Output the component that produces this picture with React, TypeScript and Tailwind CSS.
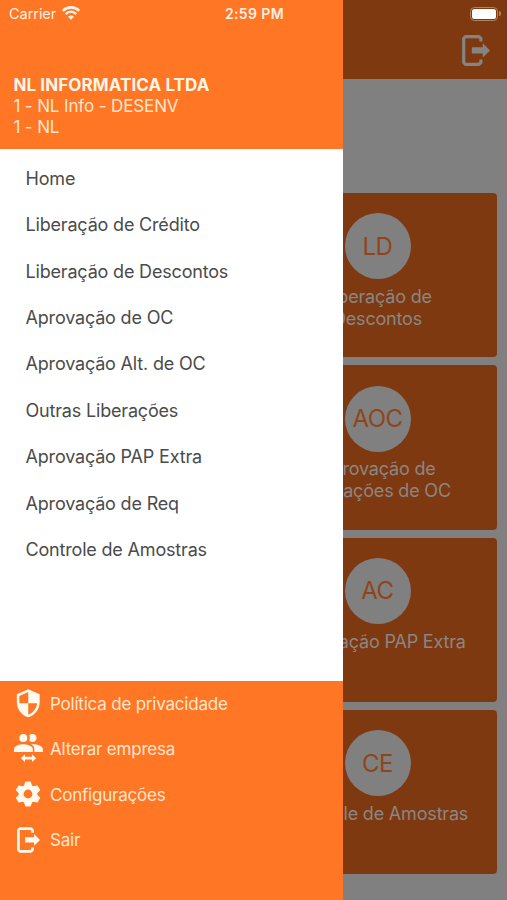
import { MdSecurity } from "react-icons/md";

const menuItems = [
  "Home",
  "Liberação de Crédito",
  "Liberação de Descontos",
  "Aprovação de OC",
  "Aprovação Alt. de OC",
  "Outras Liberações",
  "Aprovação PAP Extra",
  "Aprovação de Req",
  "Controle de Amostras",
];

const cards = [
  { initials: "LD", lines: ["Liberação de", "Descontos"] },
  { initials: "AOC", lines: ["Aprovação de", "Alterações de OC"] },
  { initials: "AC", lines: ["Aprovação PAP Extra"] },
  { initials: "CE", lines: ["Controle de Amostras"] },
];

const gearAngles = [0, 60, 120, 180, 240, 300];

function ExitIcon({ className }: { className?: string }) {
  return (
    <svg viewBox="0 0 28 31" className={className} fill="none" aria-hidden="true">
      <path
        d="M18.9 6.6V3.4L17 1.7H3.4L1.7 3.4V27.6L3.4 29.3H17L18.9 27.6V24.6"
        stroke="currentColor"
        strokeWidth="3.2"
        strokeLinejoin="round"
      />
      <path d="M9.8 12.3H20.8V8.2L28 15.4L20.8 22.6V18.5H9.8Z" fill="currentColor" />
    </svg>
  );
}

function SwitchPeopleIcon({ className }: { className?: string }) {
  return (
    <svg viewBox="0 0 29 28" className={className} fill="currentColor" aria-hidden="true">
      <circle cx="9.3" cy="4" r="4" />
      <path d="M15.2 1.5A4.1 4.1 0 1 1 15.2 6.5A5.2 5.2 0 0 0 15.2 1.5Z" />
      <path d="M0 18V15.2C0 11.7 5.4 10.2 9.3 10.2S18.8 11.7 18.8 15.2V18Z" />
      <path d="M17.2 10.3C22 9.8 28.8 11.4 28.8 15.2V18H20.4V15.2C20.4 13 19.1 11.4 17.2 10.3Z" />
      <path d="M6.8 24.2L11 20.2V22.8H18V20.2L22.2 24.2L18 28V25.6H11V28Z" />
    </svg>
  );
}

function GearIcon({ className }: { className?: string }) {
  return (
    <svg viewBox="0 0 26 26" className={className} fill="none" aria-hidden="true">
      <circle cx="13" cy="13" r="6.9" stroke="currentColor" strokeWidth="5" />
      <g fill="currentColor" stroke="currentColor" strokeLinejoin="round">
        {gearAngles.map((angle) => (
          <path key={angle} d="M10.6 1L9.3 5.6H16.7L15.4 1Z" transform={`rotate(${angle} 13 13)`} />
        ))}
      </g>
    </svg>
  );
}

function WifiIcon() {
  return (
    <svg viewBox="0 0 18 14" className="-mt-0.5 h-3.5 w-[18px]" fill="none" aria-hidden="true">
      <path d="M.8 4.8C5.4 .2 12.6 .2 17.2 4.8" stroke="currentColor" strokeWidth="2.6" />
      <path d="M3.7 8.1C6.8 5.1 11.2 5.1 14.3 8.1" stroke="currentColor" strokeWidth="2.5" />
      <path d="M6 10.7C7.7 9.2 10.3 9.2 12 10.7L9 13.7Z" fill="currentColor" />
    </svg>
  );
}

function StatusBar() {
  return (
    <div className="absolute inset-x-0 top-0 grid h-7 grid-cols-3 items-center pl-[8px] pr-[6px] text-[#fff1e4]">
      <div className="flex items-center gap-[6px] pl-px text-[14.5px] tracking-[-0.05px]">
        Carrier
        <WifiIcon />
      </div>
      <div className="-mt-px text-center text-[14px] font-semibold tracking-[0.4px]">2:59 PM</div>
      <div className="-mt-px flex items-center justify-end gap-px">
        <div className="h-[14px] w-[28px] rounded-[4.5px] border border-[#b5815f] p-px">
          <div className="h-full rounded-[2.5px] bg-white" />
        </div>
        <div className="h-[5px] w-[2px] rounded-r-full bg-[#b5815f]" />
      </div>
    </div>
  );
}

function HomeScreen() {
  return (
    <div className="flex h-full flex-col bg-[#808080]">
      <header className="flex h-[79px] justify-end bg-[#7e3911] pr-[17px] pt-[35px]">
        <ExitIcon className="h-[31px] w-7 text-[#868482]" />
      </header>
      <main className="mt-[114px] flex flex-col items-end gap-2 pr-[10px]">
        {cards.map((card) => (
          <section
            key={card.initials}
            className="flex h-[164.3px] w-[239px] flex-col items-center rounded-[4px] bg-[#7e3911] pt-[20.4px]"
          >
            <div className="flex size-[66px] items-center justify-center rounded-full bg-[#808080] pt-px text-[24px] tracking-[-0.5px] text-[#8f4519]">
              {card.initials}
            </div>
            <div className="mt-[6.6px] text-center text-[18px] leading-[22px] tracking-[-0.18px] text-[#8b8683]">
              {card.lines.map((line) => (
                <p key={line} className="whitespace-nowrap">{line}</p>
              ))}
            </div>
          </section>
        ))}
      </main>
    </div>
  );
}

function Drawer() {
  return (
    <aside className="absolute inset-y-0 left-0 flex w-[343px] flex-col bg-white">
      <header className="h-[149px] bg-[#ff7624] pl-[13.4px] pt-[75px] text-[17px] leading-[21px] tracking-[-0.13px] text-[#ffe6ce]">
        <p className="font-bold tracking-[0.1px] text-[#fff6ea]">NL INFORMATICA LTDA</p>
        <p>1 - NL Info - DESENV</p>
        <p>1 - NL</p>
      </header>
      <nav className="flex-1 pl-[25.5px] pt-[6.2px] text-[18px] tracking-[-0.18px] text-[#4b4b4b]">
        {menuItems.map((item) => (
          <div key={item} className="flex h-[46.4px] items-center">{item}</div>
        ))}
      </nav>
      <footer className="h-[219px] bg-[#ff7624] pl-3 pt-[0.6px] text-[17px] tracking-[-0.21px] text-[#ffe6ce]">
        <div className="flex h-[45.6px] items-center gap-[6px]">
          <MdSecurity className="mb-[3px] ml-px mr-[0.5px] size-[30.5px] text-[#fffaf0]" />
          Política de privacidade
        </div>
        <div className="flex h-[45.6px] items-center gap-[6px]">
          <SwitchPeopleIcon className="mb-[3px] ml-0.5 mr-px h-7 w-[29px] text-[#fffaf0]" />
          Alterar empresa
        </div>
        <div className="flex h-[45.6px] items-center gap-[6px]">
          <GearIcon className="mb-[3px] ml-[3px] mr-[3px] size-[26px] text-[#fffaf0]" />
          Configurações
        </div>
        <div className="flex h-[45.6px] items-center gap-[6px]">
          <ExitIcon className="mb-[3px] ml-[5px] mr-1 h-[26px] w-[23px] text-[#fffaf0]" />
          Sair
        </div>
      </footer>
    </aside>
  );
}

export default function App() {
  return (
    <div className="relative h-[900px] w-[507px] overflow-hidden font-['Inter',sans-serif]">
      <HomeScreen />
      <Drawer />
      <StatusBar />
    </div>
  );
}
